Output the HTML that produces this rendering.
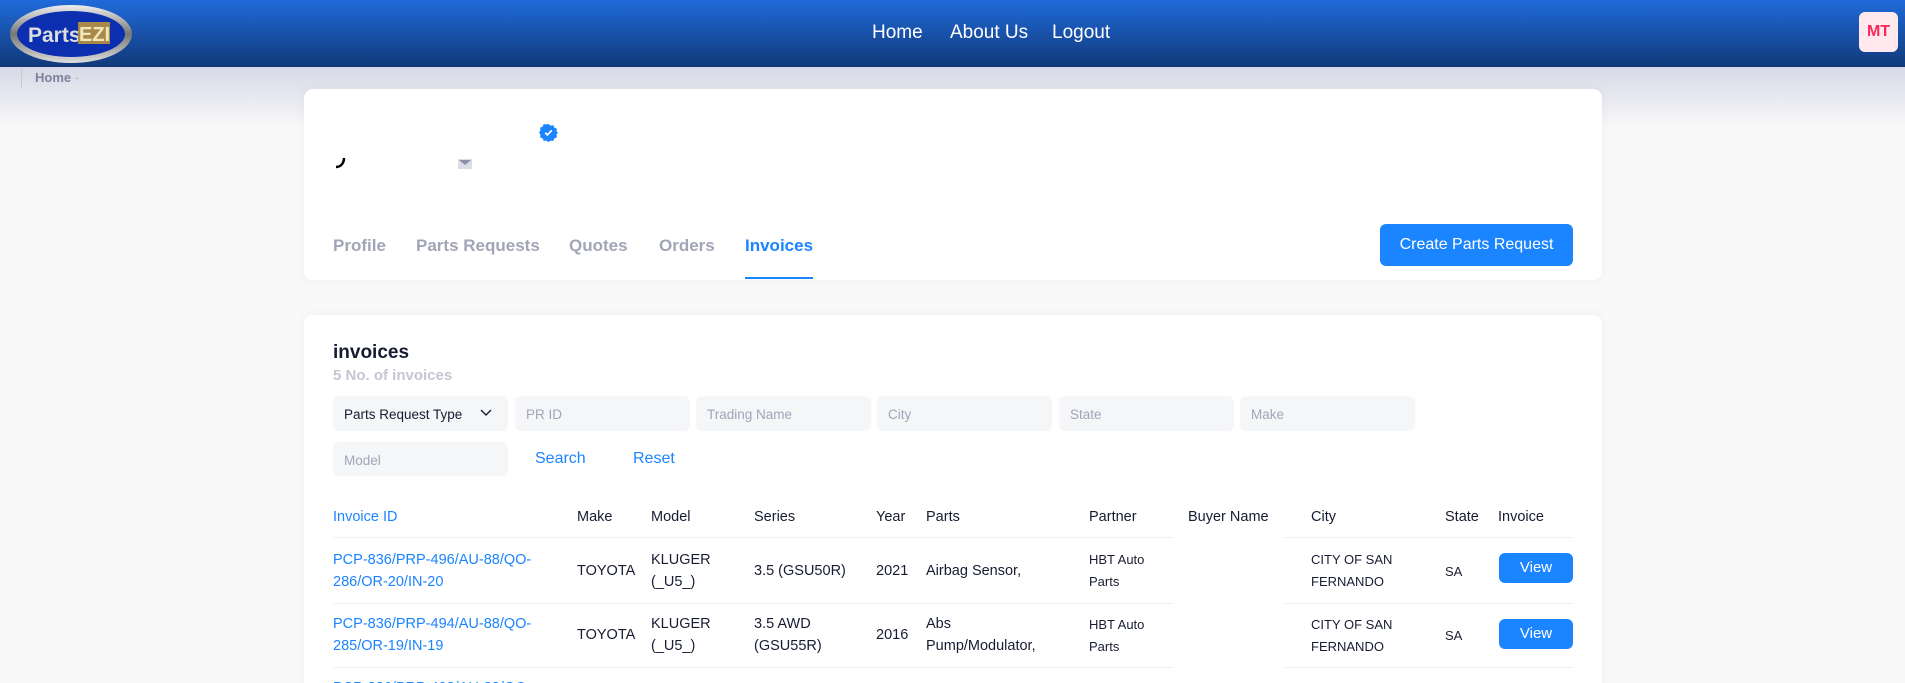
<!DOCTYPE html>
<html style="overflow:hidden;width:1905px;height:683px"><head><meta charset="utf-8"><style>
*{margin:0;padding:0;box-sizing:border-box}
body{width:1905px;height:683px;overflow:hidden;background:#f9f9f9;font-family:"Liberation Sans",sans-serif;position:relative;color:#181c32}
#w{position:absolute;left:0;top:0;width:1905px;height:683px;overflow:hidden}
.a{position:absolute;white-space:nowrap}
.nav{position:absolute;left:0;top:0;width:1905px;height:67px;background:linear-gradient(#1f6ad9,#11397a)}
.shade{position:absolute;left:0;top:67px;width:1905px;height:60px;background:linear-gradient(#d6d8e6,#f9f9f9)}
.navl{color:#fff;font-size:19px;top:22px}
.card{position:absolute;background:#fff;border-radius:9px;box-shadow:0 0 12px rgba(0,0,0,.05)}
.tab{font-size:17px;font-weight:bold;color:#a1a5b7;top:236px}
.inp{position:absolute;height:35px;width:175px;background:#f5f6f8;border-radius:6px;font-size:13.5px;color:#a1a5b7;padding:11px 11px}
.th{font-size:14.5px;top:509px;color:#181c32}
.td{font-size:14.5px;line-height:22px;color:#181c32}
.tds{font-size:13px;line-height:22px}
.blue{color:#1b84ff}
.line{position:absolute;height:1px;background:#eff0f3}
.btn{position:absolute;background:#1b84ff;color:#fff;border-radius:6px;text-align:center}
</style></head><body><div id="w">
<div class="nav"></div>
<div class="shade"></div>
<svg class="a" style="left:8px;top:2px" width="126" height="64" viewBox="0 0 126 64">
<defs><linearGradient id="r" x1="0" y1="0" x2="0" y2="1"><stop offset="0" stop-color="#eee"/><stop offset=".5" stop-color="#777"/><stop offset="1" stop-color="#ddd"/></linearGradient></defs>
<ellipse cx="63" cy="32" rx="61" ry="29" fill="url(#r)"/>
<ellipse cx="63" cy="32" rx="54" ry="23" fill="#0c2fb0"/>
<text x="20" y="40" font-family="Liberation Sans" font-weight="bold" font-size="21" fill="#ddd">Parts</text>
<rect x="70" y="20" width="32" height="22" fill="#a8894a"/>
<text x="71" y="39" font-family="Liberation Sans" font-weight="bold" font-size="20" fill="#f3e6b8">EZI</text>
</svg>
<div class="a navl" style="left:872px">Home</div>
<div class="a navl" style="left:950px">About Us</div>
<div class="a navl" style="left:1052px">Logout</div>
<div class="a" style="left:1859px;top:12px;width:39px;height:40px;background:#ffe8ee;border-radius:6px;color:#f8285a;font-weight:bold;font-size:16px;text-align:center;line-height:40px">MT</div>
<div class="a" style="left:21px;top:69px;width:1px;height:19px;background:#c8cad6"></div>
<div class="a" style="left:35px;top:70px;font-size:13px;font-weight:bold;color:#7e82a0">Home <span style="color:#b5b8c8;font-weight:normal">-</span></div>

<div class="card" style="left:304px;top:89px;width:1298px;height:191px"></div>
<svg class="a" style="left:539px;top:123px" width="19" height="19" viewBox="0 0 20 20"><path d="M10 1l2.3 1.7 2.8-.3 1.1 2.6 2.6 1.1-.3 2.8L20 10l-1.5 2.3.3 2.8-2.6 1.1-1.1 2.6-2.8-.3L10 20l-2.3-1.5-2.8.3-1.1-2.6-2.6-1.1.3-2.8L0 10l1.5-2.3-.3-2.8 2.6-1.100 1.1-2.6 2.8.3z" fill="#1b84ff"/><path d="M6.5 10.3l2.3 2.2 4.7-4.7" stroke="#fff" stroke-width="1.8" fill="none"/></svg>
<svg class="a" style="left:334px;top:157px" width="12" height="12"><path d="M10 1c0 5-3 9-8 9" stroke="#000" stroke-width="2.5" fill="none"/></svg>
<div class="a" style="left:458px;top:159px;width:14px;height:10px;background:#dcdde6"></div>
<svg class="a" style="left:458px;top:159px" width="14" height="10"><path d="M1 1l6 5 6-5z" fill="#8b8fa8"/></svg>
<div class="a tab" style="left:333px">Profile</div>
<div class="a tab" style="left:416px">Parts Requests</div>
<div class="a tab" style="left:569px">Quotes</div>
<div class="a tab" style="left:659px">Orders</div>
<div class="a tab" style="left:745px;color:#1b84ff">Invoices</div>
<div class="a" style="left:745px;top:277px;width:68px;height:2px;background:#1b84ff"></div>
<div class="btn" style="left:1380px;top:224px;width:193px;height:42px;line-height:42px;font-size:16px">Create Parts Request</div>

<div class="card" style="left:304px;top:315px;width:1298px;height:400px"></div>
<div class="a" style="left:333px;top:342px;font-size:19px;font-weight:bold">invoices</div>
<div class="a" style="left:333px;top:367px;font-size:15px;color:#c4c6d4;font-weight:bold">5 No. of invoices</div>
<div class="inp" style="left:333px;top:396px;color:#181c32">Parts Request Type</div>
<svg class="a" style="left:480px;top:409px" width="12" height="8"><path d="M1 1l5 5 5-5" stroke="#181c32" stroke-width="1.4" fill="none"/></svg>
<div class="inp" style="left:515px;top:396px">PR ID</div>
<div class="inp" style="left:696px;top:396px">Trading Name</div>
<div class="inp" style="left:877px;top:396px">City</div>
<div class="inp" style="left:1059px;top:396px">State</div>
<div class="inp" style="left:1240px;top:396px">Make</div>
<div class="inp" style="left:333px;top:442px;height:34px">Model</div>
<div class="a blue" style="left:535px;top:450px;font-size:16px">Search</div>
<div class="a blue" style="left:633px;top:450px;font-size:16px">Reset</div>

<div class="a th blue" style="left:333px">Invoice ID</div>
<div class="a th" style="left:577px">Make</div>
<div class="a th" style="left:651px">Model</div>
<div class="a th" style="left:754px">Series</div>
<div class="a th" style="left:876px">Year</div>
<div class="a th" style="left:926px">Parts</div>
<div class="a th" style="left:1089px">Partner</div>
<div class="a th" style="left:1188px">Buyer Name</div>
<div class="a th" style="left:1311px">City</div>
<div class="a th" style="left:1445px">State</div>
<div class="a th" style="left:1498px">Invoice</div>
<div class="line" style="left:333px;top:537px;width:841px"></div>
<div class="line" style="left:1284px;top:537px;width:289px"></div>
<div class="line" style="left:333px;top:603px;width:841px"></div>
<div class="line" style="left:1284px;top:603px;width:289px"></div>
<div class="line" style="left:333px;top:667px;width:841px"></div>
<div class="line" style="left:1284px;top:667px;width:289px"></div>

<div class="a td blue" style="left:333px;top:549px">PCP-836/PRP-496/AU-88/QO-<br>286/OR-20/IN-20</div>
<div class="a td" style="left:577px;top:560px">TOYOTA</div>
<div class="a td" style="left:651px;top:549px">KLUGER<br>(_U5_)</div>
<div class="a td" style="left:754px;top:560px">3.5 (GSU50R)</div>
<div class="a td" style="left:876px;top:560px">2021</div>
<div class="a td" style="left:926px;top:560px">Airbag Sensor,</div>
<div class="a tds" style="left:1089px;top:549px">HBT Auto<br>Parts</div>
<div class="a tds" style="left:1311px;top:549px">CITY OF SAN<br>FERNANDO</div>
<div class="a tds" style="left:1445px;top:561px">SA</div>
<div class="btn" style="left:1499px;top:553px;width:74px;height:30px;line-height:30px;font-size:15px">View</div>

<div class="a td blue" style="left:333px;top:613px">PCP-836/PRP-494/AU-88/QO-<br>285/OR-19/IN-19</div>
<div class="a td" style="left:577px;top:624px">TOYOTA</div>
<div class="a td" style="left:651px;top:613px">KLUGER<br>(_U5_)</div>
<div class="a td" style="left:754px;top:613px">3.5 AWD<br>(GSU55R)</div>
<div class="a td" style="left:876px;top:624px">2016</div>
<div class="a td" style="left:926px;top:613px">Abs<br>Pump/Modulator,</div>
<div class="a tds" style="left:1089px;top:614px">HBT Auto<br>Parts</div>
<div class="a tds" style="left:1311px;top:614px">CITY OF SAN<br>FERNANDO</div>
<div class="a tds" style="left:1445px;top:625px">SA</div>
<div class="btn" style="left:1499px;top:619px;width:74px;height:30px;line-height:30px;font-size:15px">View</div>
<div class="a td blue" style="left:333px;top:677px">PCP-836/PRP-493/AU-88/QO-</div>
</div></body></html>
